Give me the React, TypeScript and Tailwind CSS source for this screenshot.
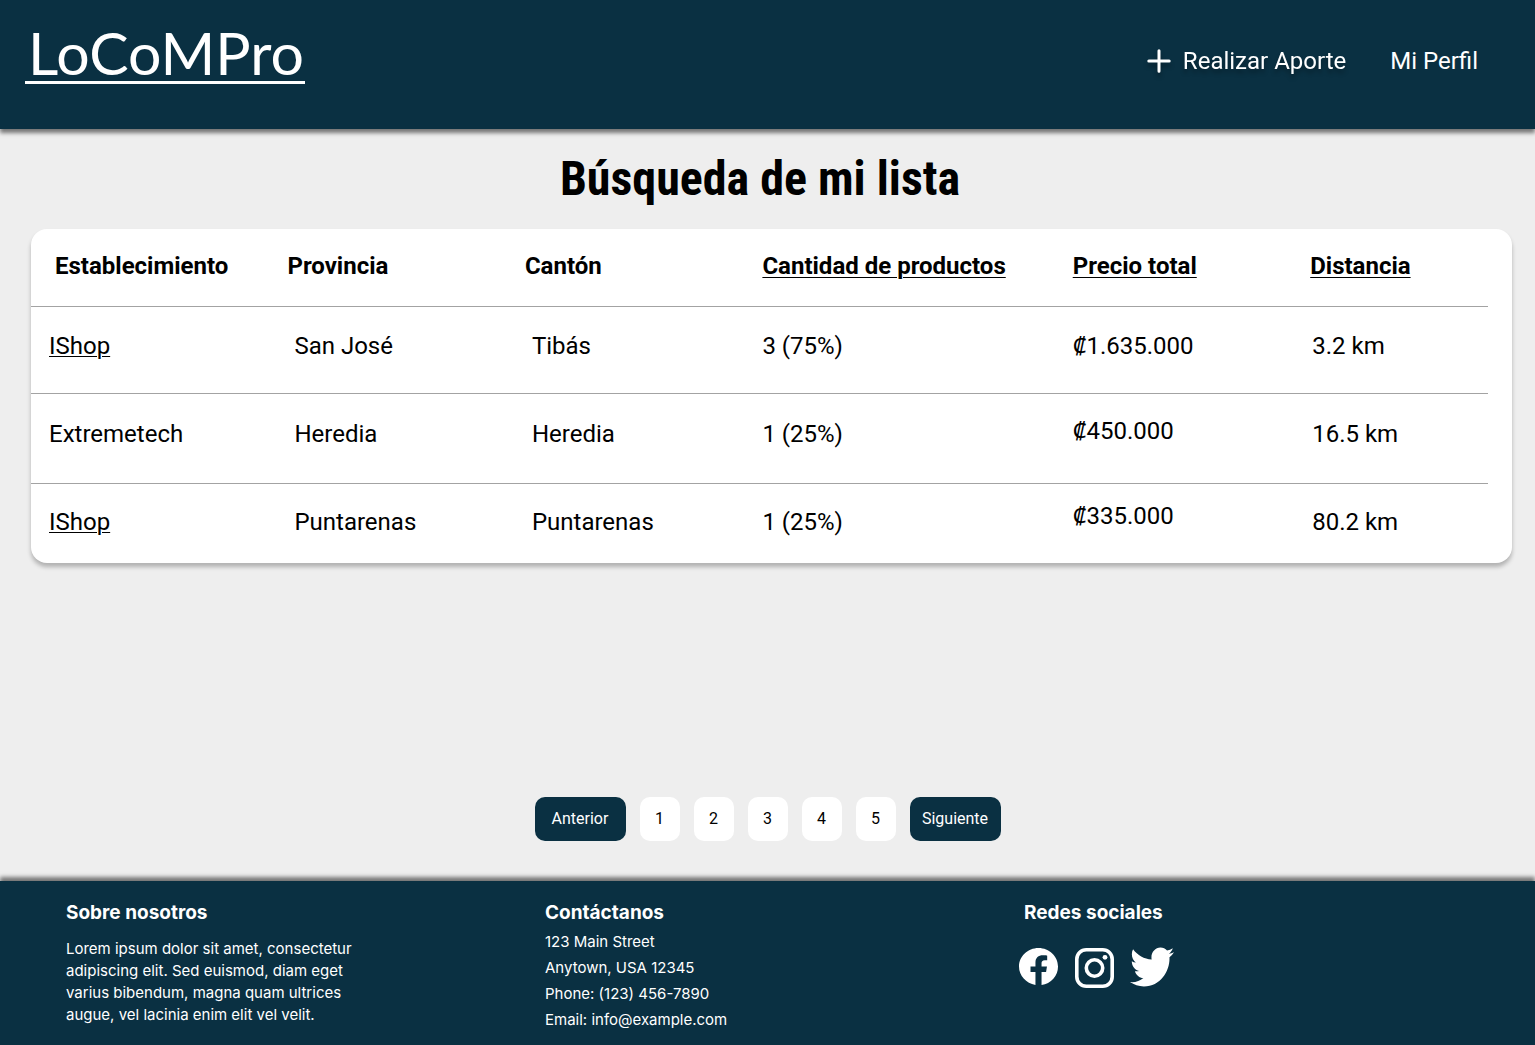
import { FaTwitter } from "react-icons/fa";
import { clsx } from "clsx";

const rows = [
  { store: "IShop", link: true, province: "San José", canton: "Tibás", amount: "3 (75%)", price: "1.635.000", distance: "3.2 km", rowClass: "h-[87px] *:pb-2", priceClass: "" },
  { store: "Extremetech", link: false, province: "Heredia", canton: "Heredia", amount: "1 (25%)", price: "450.000", distance: "16.5 km", rowClass: "h-[90px] *:pb-2", priceClass: "pb-3.5!" },
  { store: "IShop", link: true, province: "Puntarenas", canton: "Puntarenas", amount: "1 (25%)", price: "335.000", distance: "80.2 km", rowClass: "h-20 *:pb-0.5", priceClass: "pb-3.5!" },
];

const sortButton = "cursor-pointer font-bold underline decoration-1 underline-offset-3";

function Header() {
  return (
    <header className="z-10 flex h-[129px] items-start justify-between bg-[#0a3042] pl-[25px] pr-[57px] text-white shadow-[0_4px_4px_rgba(0,0,0,0.5)]">
      <a href="#" className="mt-6 border-b-3 border-white pl-[3px] pr-px font-['Lato','Liberation_Sans',sans-serif] text-[59px] leading-[57px]">
        LoCoMPro
      </a>
      <nav className="mt-[45px] flex items-center gap-11 text-2xl leading-8">
        <a href="#" className="flex items-center gap-3 [filter:drop-shadow(0_4px_2px_rgba(0,0,0,0.3))]">
          <svg viewBox="0 0 24 24" className="size-6" fill="none" stroke="currentColor" strokeWidth="3" strokeLinecap="round" aria-hidden="true">
            <path d="M12 1.8v20.4M1.8 12h20.4" />
          </svg>
          Realizar Aporte
        </a>
        <a href="#">Mi Perfil</a>
      </nav>
    </header>
  );
}

function ResultsTable() {
  return (
    <div className="mr-[23px] ml-[31px] rounded-2xl bg-white pr-6 shadow-[0_4px_4px_rgba(0,0,0,0.25)]">
      <table className="w-full table-fixed border-collapse text-left text-2xl">
        <colgroup>
          <col className="w-[17.6%]" />
          <col className="w-[16.3%]" />
          <col className="w-[16.3%]" />
          <col className="w-[21.3%]" />
          <col className="w-[16.3%]" />
          <col />
        </colgroup>
        <thead>
          <tr className="h-[77px] border-b border-[#a3a3a3] *:pb-0.5">
            <th scope="col" className="pl-6">Establecimiento</th>
            <th scope="col">Provincia</th>
            <th scope="col">Cantón</th>
            <th scope="col"><button type="button" className={sortButton}>Cantidad de productos</button></th>
            <th scope="col"><button type="button" className={sortButton}>Precio total</button></th>
            <th scope="col"><button type="button" className={sortButton}>Distancia</button></th>
          </tr>
        </thead>
        <tbody>
          {rows.map((row, i) => (
            <tr key={i} className={clsx("border-b border-[#a3a3a3] last:border-b-0", row.rowClass)}>
              <td className="pl-[18px]">
                {row.link ? <a href="#" className="underline decoration-1 underline-offset-2">{row.store}</a> : row.store}
              </td>
              <td className="pl-[7px]">{row.province}</td>
              <td className="pl-[7px]">{row.canton}</td>
              <td>{row.amount}</td>
              <td className={row.priceClass}>
                <span className="font-['Noto_Sans','Open_Sans',sans-serif] leading-none">₡</span>
                {row.price}
              </td>
              <td className="pl-0.5">{row.distance}</td>
            </tr>
          ))}
        </tbody>
      </table>
    </div>
  );
}

function Pagination() {
  const edge = "h-11 w-[91px] cursor-pointer rounded-[10px] bg-[#0a3042] text-white";
  return (
    <nav aria-label="Paginación" className="mt-auto flex justify-center gap-3.5 pb-10 text-base">
      <button type="button" className={edge}>Anterior</button>
      {[1, 2, 3, 4, 5].map((n) => (
        <button key={n} type="button" className="h-11 w-10 cursor-pointer rounded-[10px] bg-white">{n}</button>
      ))}
      <button type="button" className={edge}>Siguiente</button>
    </nav>
  );
}

function Footer() {
  const heading = "text-[19px] leading-6 font-bold";
  return (
    <footer className="grid min-h-[164px] grid-cols-3 bg-[#0a3042] pt-5 pr-8 pl-[66px] font-['Inter','Liberation_Sans',sans-serif] text-[15px] text-white shadow-[0_-4px_4px_rgba(0,0,0,0.5)]">
      <section>
        <h2 className={heading}>Sobre nosotros</h2>
        <p className="mt-[13px] w-[300px] leading-[22px]">
          Lorem ipsum dolor sit amet, consectetur adipiscing elit. Sed euismod, diam eget varius bibendum, magna quam ultrices augue, vel lacinia enim elit vel velit.
        </p>
      </section>
      <section>
        <h2 className={heading}>Contáctanos</h2>
        <address className="mt-1 leading-[26px] not-italic">
          <p>123 Main Street</p>
          <p>Anytown, USA 12345</p>
          <p>Phone: (123) 456-7890</p>
          <p>Email: info@example.com</p>
        </address>
      </section>
      <section>
        <h2 className={heading}>Redes sociales</h2>
        <div className="mt-[18px] -ml-[5px] flex items-center gap-4">
          <a href="#" aria-label="Facebook" className="pb-1">
            <svg viewBox="2 2 20 20" preserveAspectRatio="none" fill="currentColor" className="block h-[37px] w-[39px]">
              <path d="M12 2.04C6.5 2.04 2 6.53 2 12.06C2 17.06 5.66 21.21 10.44 21.96V14.96H7.9V12.06H10.44V9.85C10.44 7.34 11.93 5.96 14.22 5.96C15.31 5.96 16.45 6.15 16.45 6.15V8.62H15.19C13.95 8.62 13.56 9.39 13.56 10.18V12.06H16.34L15.89 14.96H13.56V21.96A10 10 0 0 0 22 12.06C22 6.53 17.5 2.04 12 2.04Z" />
            </svg>
          </a>
          <a href="#" aria-label="Instagram">
            <svg viewBox="0 0 40 40" fill="none" stroke="currentColor" strokeWidth="3.6" className="block size-10">
              <rect x="2.8" y="1.8" width="35.4" height="36.4" rx="9.5" />
              <circle cx="20.5" cy="20" r="8.2" />
              <circle cx="31" cy="9.3" r="2.4" fill="currentColor" stroke="none" />
            </svg>
          </a>
          <a href="#" aria-label="Twitter" className="pb-0.5"><FaTwitter className="block h-12 w-11" preserveAspectRatio="none" /></a>
        </div>
      </section>
    </footer>
  );
}

export default function App() {
  return (
    <div className="flex min-h-screen flex-col bg-[#eeeeee] font-['Roboto','Liberation_Sans',sans-serif] text-black">
      <Header />
      <main className="flex flex-1 flex-col">
        <h1 className="mt-[22px] mb-[22px] pr-[15px] text-center font-['Roboto_Condensed','Roboto',sans-serif] text-5xl leading-[56px] font-bold">
          Búsqueda de mi lista
        </h1>
        <ResultsTable />
        <Pagination />
      </main>
      <Footer />
    </div>
  );
}
